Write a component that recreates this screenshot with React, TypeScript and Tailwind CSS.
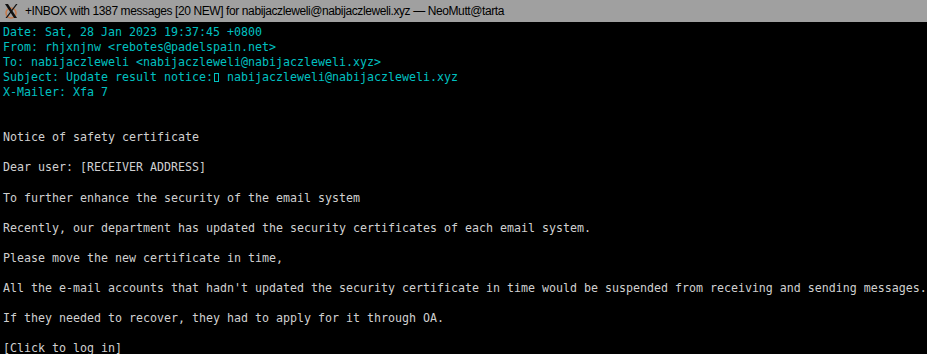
const headers = [
  "Date: Sat, 28 Jan 2023 19:37:45 +0800",
  "From: rhjxnjnw <rebotes@padelspain.net>",
  "To: nabijaczleweli <nabijaczleweli@nabijaczleweli.xyz>",
];

const body = [
  "",
  "",
  "Notice of safety certificate",
  "",
  "Dear user: [RECEIVER ADDRESS]",
  "",
  "To further enhance the security of the email system",
  "",
  "Recently, our department has updated the security certificates of each email system.",
  "",
  "Please move the new certificate in time,",
  "",
  "All the e-mail accounts that hadn't updated the security certificate in time would be suspended from receiving and sending messages.",
  "",
  "If they needed to recover, they had to apply for it through OA.",
  "",
  "[Click to log in]",
];

function XLogo() {
  return (
    <svg width="16" height="16" viewBox="0 0 16 16">
      <circle cx="8" cy="10" r="5" fill="none" stroke="#c87a4a" strokeWidth="1.5" />
      <path d="M2 1 L5 1 L14 15 L11 15 Z" fill="#111" />
      <path d="M13 1 L14.5 1 L4 15 L2.5 15 Z" fill="#111" />
    </svg>
  );
}

export default function App() {
  return (
    <div className="h-[354px] w-[927px] overflow-hidden bg-black">
      {/* Title bar */}
      <div className="flex h-[22px] items-center gap-[6px] bg-[#a0a0a0] pl-[3px] font-['Liberation_Sans',sans-serif] text-[12px] tracking-[-0.4px] text-black">
        <XLogo />
        <span>+INBOX with 1387 messages [20 NEW] for nabijaczleweli@nabijaczleweli.xyz — NeoMutt@tarta</span>
      </div>

      {/* Pager */}
      <div className="pl-[3px] pt-[2.5px] font-['DejaVu_Sans_Mono',monospace] text-[11.63px] leading-[15.1px] whitespace-pre">
        {headers.map((line, i) => (
          <div key={i} className="text-[#00c0c0]">
            {line}
          </div>
        ))}
        <div className="text-[#00c0c0]">
          Subject: Update result notice:
          <span className="inline-flex w-[7px] justify-center align-middle">
            <span className="h-[9px] w-[5px] border border-[#00c0c0]" />
          </span>
          {" nabijaczleweli@nabijaczleweli.xyz"}
        </div>
        <div className="text-[#00c0c0]">X-Mailer: Xfa 7</div>
        {body.map((line, i) => (
          <div key={i} className="text-[#d0d0d0]">
            {line || " "}
          </div>
        ))}
      </div>
    </div>
  );
}
